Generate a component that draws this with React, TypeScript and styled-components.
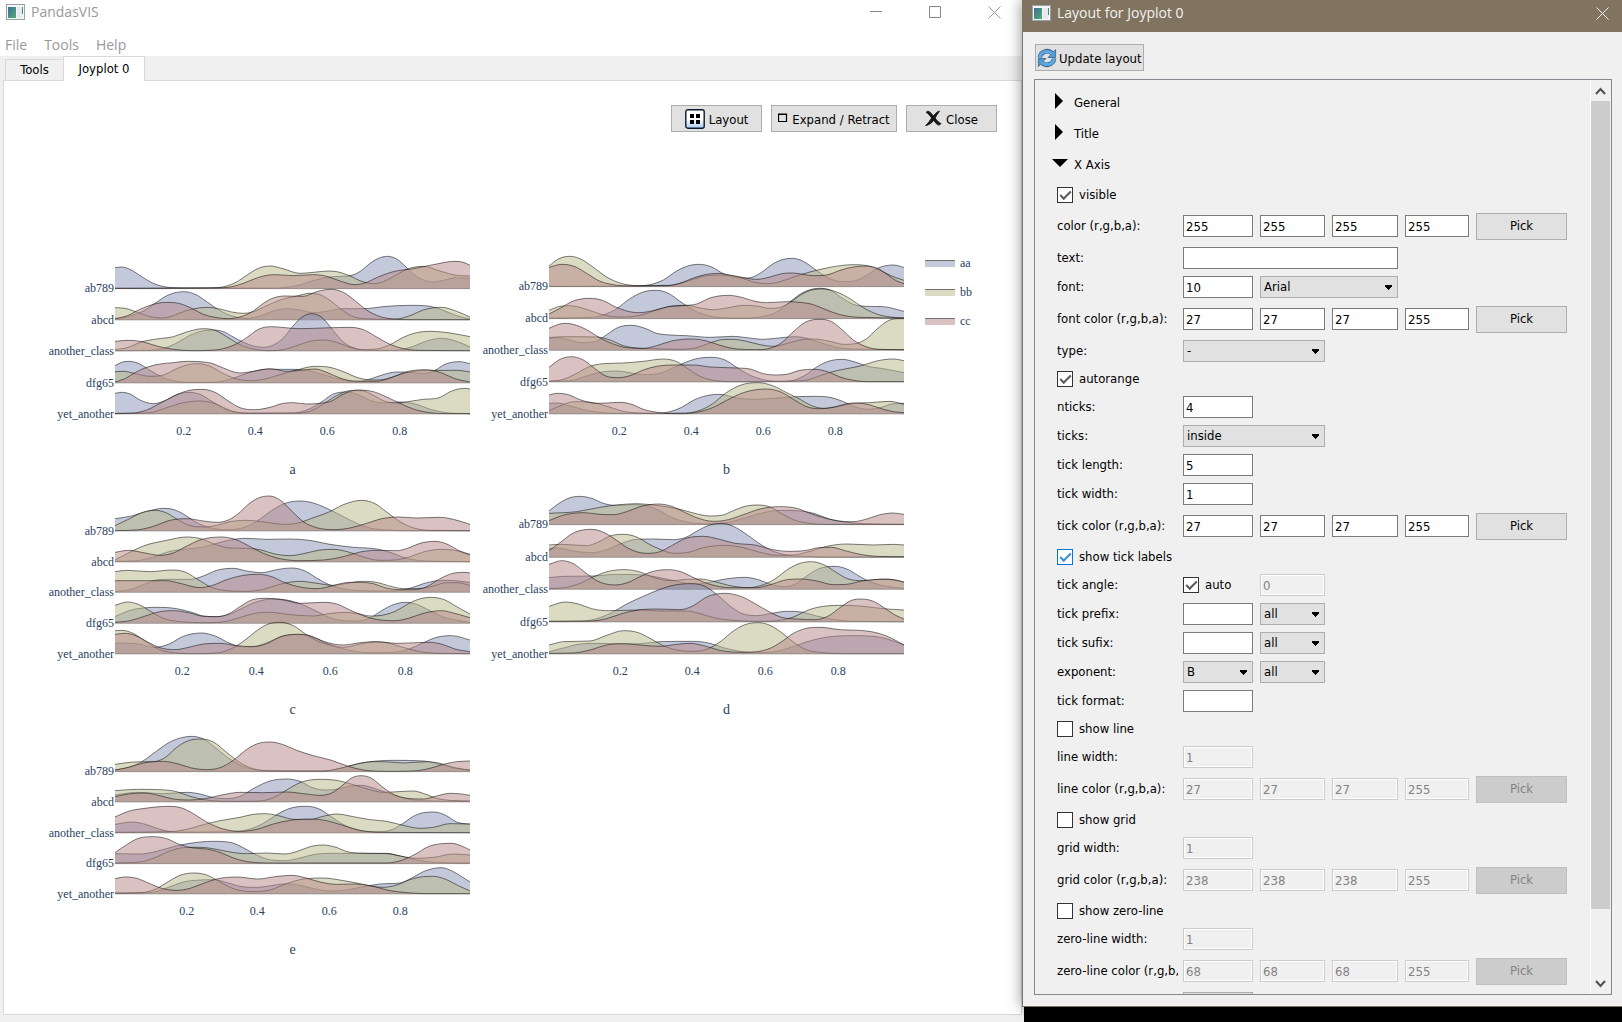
import React, { useId, useState } from "react";
import styled, { createGlobalStyle, css } from "styled-components";

const uiFont = `"DejaVu Sans Condensed", Tahoma, "DejaVu Sans", sans-serif`;
const titleFont = `"Open Sans", "Segoe UI", "Noto Sans", sans-serif`;
const plotFont = `"Liberation Serif", "Times New Roman", serif`;

const GlobalStyle = createGlobalStyle`
  *, *::before, *::after { box-sizing: border-box; }
  body { margin: 0; background: #000; font: 13px/16px ${uiFont}; color: #000; }
  button, input, select { font: inherit; color: inherit; margin: 0; border-radius: 0; }
`;

/* ---------- chart data: "x,y" control points, three units per pixel ---------- */

interface RidgeRow { base: number; series: [string, string, string]; }
interface Panel { name: string; shift: number; ticks: number[]; rows: RidgeRow[]; }

const classNames = ["ab789", "abcd", "another_class", "dfg65", "yet_another"];

const panels: Panel[] = [
  {
    name: "a", shift: 0, ticks: [431, 646, 862, 1079],
    rows: [
      { base: 145, series: [
        "225,83 245,81 270,88 305,110 340,130 385,142 450,144 700,144 770,137 810,125 860,112 900,109 935,106 965,91 990,70 1015,55 1043,49 1070,57 1100,83 1125,106 1150,120 1180,126 1210,121 1250,113 1290,115",
        "225,145 500,144 560,138 590,126 620,106 655,85 690,78 725,85 780,100 820,97 865,93 900,97 930,108 965,124 1000,131 1030,125 1060,110 1100,88 1150,79 1200,93 1250,106 1290,108",
        "225,145 520,144 580,139 610,130 640,118 670,108 705,104 760,107 820,104 860,109 900,123 945,134 975,129 1010,113 1060,95 1120,86 1180,74 1245,64 1270,67 1290,76"] },
      { base: 239, series: [
        "225,238 270,228 310,213 345,190 385,165 432,155 470,165 500,185 540,212 580,229 620,235 660,228 700,213 740,206 780,210 820,218 860,214 910,206 970,206 1040,199 1110,196 1170,199 1210,211 1250,227 1290,237",
        "225,203 255,205 290,216 330,230 368,234 400,227 430,215 465,206 500,202 540,207 575,216 610,220 640,215 680,197 720,180 770,168 810,160 840,164 870,181 905,209 935,228 970,236 1060,238 1110,227 1150,210 1205,202 1245,212 1290,231",
        "225,236 260,228 300,208 340,193 380,187 420,191 455,205 490,223 525,232 565,236 600,231 640,213 670,190 700,174 735,168 790,169 830,155 872,148 910,157 945,182 980,210 1015,228 1060,237 1120,239 1290,239"] },
      { base: 332, series: [
        "225,332 320,331 370,325 410,309 450,286 490,272 520,270 550,275 580,291 610,307 640,318 670,322 700,315 730,294 760,257 785,232 815,221 845,232 880,272 910,306 940,323 980,331 1060,331 1120,319 1160,303 1205,295 1250,304 1290,321",
        "225,329 265,322 300,307 350,297 400,290 440,276 490,266 525,271 560,290 600,314 640,327 690,332 730,329 770,317 810,304 852,300 890,307 930,322 970,329 1010,327 1050,314 1090,292 1130,278 1170,274 1230,279 1290,290",
        "225,304 265,301 310,306 350,318 400,328 460,332 510,331 550,326 580,316 620,293 655,268 695,260 735,263 775,266 850,264 930,262 970,269 1010,291 1050,313 1090,326 1140,331 1290,332"] },
      { base: 428, series: [
        "225,377 245,367 267,364 295,370 330,391 370,413 410,424 450,427 510,427 550,423 590,411 630,397 680,388 750,388 800,391 850,404 900,418 950,425 985,419 1020,407 1070,396 1110,397 1150,401 1185,391 1215,373 1260,365 1290,371",
        "225,395 250,394 290,402 330,409 370,405 410,386 440,375 475,371 510,379 545,398 580,414 635,422 680,416 720,404 770,390 825,379 870,382 915,397 950,412 1000,420 1040,417 1080,404 1120,394 1150,392 1250,391 1290,396",
        "225,426 255,416 285,398 320,382 360,372 400,368 440,364 480,365 515,370 550,384 600,399 640,394 690,386 740,394 790,390 825,387 860,397 900,414 940,423 1010,424 1060,410 1105,394 1160,389 1205,399 1245,416 1290,426"] },
      { base: 521, series: [
        "225,460 245,457 270,462 300,480 340,491 375,482 410,464 445,457 480,463 520,487 555,507 610,519 760,519 800,510 840,489 880,462 920,456 955,464 990,481 1030,489 1080,486 1125,492 1175,509 1220,518 1290,521",
        "225,521 330,518 380,503 430,488 480,483 525,491 575,513 630,520 780,519 815,512 850,492 890,467 930,452 965,452 1000,466 1035,484 1070,489 1110,484 1150,478 1195,474 1235,453 1275,445 1290,447",
        "225,520 280,519 320,510 360,490 400,469 440,453 485,448 525,457 565,483 600,503 645,509 690,502 730,490 760,488 800,492 840,490 875,483 905,465 950,450 1000,455 1040,471 1080,490 1120,507 1170,518 1220,521 1290,521"] },
    ],
  },
  {
    name: "b", shift: 18, ticks: [436, 652, 868, 1084],
    rows: [
      { base: 139, series: [
        "207,139 460,138 510,134 550,120 590,93 620,79 658,73 695,81 730,101 770,113 805,114 840,100 880,71 910,58 937,55 970,64 1005,88 1045,114 1090,125 1130,121 1160,106 1195,84 1240,75 1272,82",
        "207,78 235,57 270,49 300,56 340,82 380,111 420,129 480,137 570,136 620,124 670,109 720,105 780,112 820,126 860,131 900,125 940,111 990,96 1050,82 1120,74 1165,78 1200,91 1235,108 1272,121",
        "207,82 245,73 285,80 320,100 360,124 400,134 460,138 560,137 600,130 640,114 680,103 715,100 770,109 830,118 870,111 905,101 937,99 1000,107 1040,105 1080,91 1120,81 1160,78 1195,86 1225,106 1250,123 1272,131"] },
      { base: 235, series: [
        "207,234 330,232 370,225 410,206 450,176 490,156 530,151 565,160 600,184 640,210 680,226 730,233 790,234 850,229 890,216 930,185 970,157 1015,145 1050,150 1085,173 1120,193 1160,199 1210,200 1272,214",
        "207,211 235,200 265,197 300,202 340,215 385,228 430,231 480,226 530,210 570,199 620,196 660,204 700,209 740,204 790,196 830,198 870,205 900,202 930,188 965,163 1000,149 1030,147 1070,156 1110,176 1150,203 1190,222 1230,231 1272,234",
        "207,222 240,205 280,183 330,175 370,182 405,200 440,213 475,218 515,213 560,201 610,197 650,192 690,174 745,166 785,172 825,184 860,188 920,185 960,187 1000,194 1035,208 1080,224 1140,232 1272,234"] },
      { base: 330, series: [
        "207,295 235,293 270,300 305,308 345,305 380,284 415,262 455,256 495,265 530,280 570,285 620,287 690,292 760,289 800,293 850,298 895,294 945,290 985,296 1025,309 1070,322 1120,327 1272,329",
        "207,293 250,290 350,291 390,300 430,317 480,325 520,326 600,328 650,323 690,309 725,299 757,298 800,304 840,314 880,319 920,311 960,300 1000,297 1050,304 1090,313 1130,310 1160,296 1190,268 1225,242 1255,236 1272,236",
        "207,265 230,255 255,250 290,256 325,272 360,294 400,312 440,323 490,325 530,317 575,303 635,297 680,303 720,316 770,327 830,329 870,325 905,308 935,280 975,247 1020,238 1055,245 1085,268 1120,300 1155,319 1200,328 1272,329"] },
      { base: 425, series: [
        "207,424 270,422 310,411 360,397 410,393 450,398 490,404 530,402 565,390 605,372 650,356 697,352 735,360 770,382 805,403 850,419 900,424 940,421 975,406 1010,381 1045,364 1087,358 1125,366 1160,378 1210,386 1272,398",
        "207,424 250,418 290,400 325,381 370,371 430,369 490,364 550,357 590,365 625,387 660,409 700,421 750,425 900,424 970,422 1010,411 1050,397 1100,386 1145,377 1190,363 1240,357 1272,362",
        "207,382 240,358 275,350 310,360 345,386 375,407 415,413 450,407 490,390 530,379 580,375 640,375 690,381 770,384 810,387 850,401 885,405 920,403 960,391 1005,388 1045,396 1080,411 1120,421 1170,425 1272,425"] },
      { base: 521, series: [
        "207,490 230,489 265,496 310,509 360,517 420,520 530,520 570,515 605,502 640,481 680,467 720,463 770,474 820,478 880,475 950,470 1000,469 1050,472 1090,485 1130,502 1165,508 1200,503 1240,491 1272,490",
        "207,512 235,500 265,488 300,485 350,490 400,505 440,516 530,520 620,519 665,509 700,490 735,461 780,436 835,428 880,438 920,458 960,478 990,495 1030,505 1070,500 1120,490 1170,488 1230,484 1272,493",
        "207,465 230,460 265,464 300,479 350,490 380,489 420,487 455,493 490,508 540,518 600,521 650,517 700,502 740,481 790,458 860,447 905,457 945,481 985,502 1025,506 1065,501 1100,491 1130,489 1170,495 1210,508 1240,515 1272,518"] },
    ],
  },
  {
    name: "c", shift: 0, ticks: [427, 649, 871, 1096],
    rows: [
      { base: 152, series: [
        "225,116 275,108 325,93 370,85 405,90 435,105 465,125 510,143 565,149 610,143 650,124 690,95 730,72 780,63 820,69 860,85 905,107 950,130 990,144 1040,150 1110,152 1290,152",
        "225,137 265,118 305,98 345,91 380,99 410,117 445,135 495,141 530,136 570,125 620,121 680,127 730,133 775,129 815,115 865,97 910,74 965,61 1005,71 1040,96 1080,125 1125,145 1180,151 1290,152",
        "225,152 290,150 340,139 390,121 440,116 490,123 530,127 565,120 595,101 625,73 655,54 688,48 720,60 755,93 790,125 830,143 885,149 930,144 980,130 1030,115 1075,111 1130,114 1200,112 1240,118 1290,133"] },
      { base: 245, series: [
        "225,244 290,242 340,231 390,214 440,207 490,201 530,190 570,180 620,175 680,178 750,177 800,180 870,193 940,202 1010,207 1050,217 1100,235 1160,243 1290,245",
        "225,240 265,219 310,198 380,181 440,171 485,177 525,193 570,204 620,205 660,209 700,221 750,227 795,220 840,210 880,208 925,216 970,231 1020,241 1065,240 1110,230 1150,216 1200,208 1240,210 1290,225",
        "225,217 265,211 315,219 360,226 400,219 435,201 480,180 545,171 585,178 625,197 670,220 720,236 780,242 850,240 910,230 960,216 1010,211 1070,212 1105,204 1140,190 1185,184 1225,194 1255,211 1290,223"] },
      { base: 336, series: [
        "225,335 270,329 315,312 355,299 400,298 450,298 490,288 530,271 580,265 620,273 665,278 710,269 755,264 795,273 830,294 865,313 905,325 960,332 1060,333 1110,325 1150,311 1185,303 1225,301 1290,307",
        "225,275 260,271 330,275 395,270 435,276 470,296 510,320 550,331 620,334 670,328 715,314 780,304 825,309 880,316 920,310 965,304 1010,307 1045,317 1090,326 1140,326 1180,318 1220,308 1255,308 1290,317",
        "225,302 380,302 420,310 480,323 515,317 555,301 605,287 655,283 695,290 735,308 775,320 830,326 875,318 910,309 950,307 1000,311 1035,323 1080,329 1120,329 1160,320 1195,299 1235,281 1275,277 1290,279"] },
      { base: 429, series: [
        "225,410 270,391 310,384 350,382 410,386 455,397 490,408 530,410 565,404 600,388 645,367 700,357 745,361 790,375 830,394 870,413 910,422 955,423 990,414 1025,392 1060,374 1100,367 1135,375 1170,392 1210,411 1250,421 1290,427",
        "225,376 262,366 295,373 330,393 365,413 420,425 500,428 560,424 605,411 645,400 690,397 750,404 820,408 865,401 915,397 955,401 990,408 1030,405 1070,392 1100,374 1135,358 1175,352 1215,360 1250,380 1290,402",
        "225,427 270,422 310,410 355,396 400,392 445,398 490,409 530,410 565,402 600,380 635,360 680,355 730,360 780,370 850,367 890,372 930,390 975,409 1020,420 1065,422 1105,415 1150,400 1205,392 1240,399 1290,413"] },
      { base: 521, series: [
        "225,489 290,491 345,502 385,493 430,469 485,459 525,468 570,490 610,501 650,498 690,484 735,466 780,463 820,472 870,494 920,509 990,518 1060,517 1110,506 1150,488 1190,472 1235,467 1290,480",
        "225,452 245,451 275,458 315,483 355,507 400,518 470,521 530,519 570,508 610,484 645,456 680,434 720,427 760,437 795,461 830,482 870,495 910,502 960,492 1000,486 1045,489 1085,501 1140,515 1200,520 1290,521",
        "225,463 255,460 285,466 325,487 360,503 405,509 450,501 490,492 540,490 590,497 640,500 680,491 720,471 770,463 810,467 850,484 910,495 960,488 1010,485 1070,490 1130,488 1170,487 1210,494 1245,507 1290,515"] },
    ],
  },
  {
    name: "d", shift: 18, ticks: [439, 655, 874, 1093],
    rows: [
      { base: 133, series: [
        "207,93 230,75 260,57 297,49 335,55 370,70 405,76 460,74 500,77 535,90 575,112 620,126 690,131 750,126 800,112 850,98 905,91 960,93 1005,101 1045,116 1095,126 1150,131 1272,133",
        "207,100 290,95 360,82 410,75 470,71 500,73 550,79 600,88 640,99 690,108 725,106 760,92 795,79 835,75 870,81 905,101 940,119 980,129 1050,133 1272,133",
        "207,122 245,107 310,98 360,103 400,104 440,95 480,80 535,72 575,79 610,95 650,113 700,124 745,119 790,104 840,87 900,80 950,85 990,100 1030,113 1075,123 1120,125 1160,117 1200,104 1240,99 1272,103"] },
      { base: 231, series: [
        "207,205 235,204 285,214 335,218 380,209 425,190 470,178 520,177 580,179 620,171 655,151 690,135 725,130 760,139 795,160 830,185 865,207 910,223 970,229 1060,231 1272,231",
        "207,195 245,193 320,197 355,186 390,168 430,163 470,171 505,191 540,208 585,220 625,217 670,203 735,196 790,203 840,217 890,226 940,225 990,214 1040,199 1100,192 1180,195 1240,193 1272,195",
        "207,212 240,188 280,159 335,148 375,159 410,181 445,205 500,220 540,215 575,197 615,176 670,169 715,177 760,189 830,196 870,207 925,214 980,211 1015,203 1055,202 1095,212 1140,223 1190,229 1272,230"] },
      { base: 327, series: [
        "207,293 250,289 340,288 410,283 490,285 540,293 590,304 640,312 680,309 720,300 760,294 795,292 835,299 870,312 910,320 945,313 980,288 1015,267 1065,259 1105,269 1140,290 1180,309 1220,319 1272,325",
        "207,326 260,322 300,310 340,291 385,274 435,269 480,276 525,294 575,302 620,298 660,297 705,305 750,317 805,323 845,316 885,297 925,267 960,250 995,245 1035,256 1070,278 1105,297 1150,302 1210,297 1240,299 1272,307",
        "207,253 245,242 280,251 315,277 350,302 405,315 445,307 480,290 520,274 565,269 605,276 645,295 690,313 750,323 830,323 880,311 920,299 965,297 1010,303 1060,314 1100,313 1145,303 1210,298 1245,300 1272,306"] },
      { base: 425, series: [
        "207,424 310,423 350,416 395,398 440,372 490,349 540,328 585,315 635,311 675,319 710,343 750,378 785,400 830,407 870,401 920,394 970,397 1010,408 1065,419 1120,424 1272,425",
        "207,379 255,366 295,372 335,386 385,392 430,391 490,390 540,393 620,393 660,401 705,414 760,421 840,424 900,421 945,409 985,390 1030,379 1090,376 1150,379 1210,386 1272,390",
        "207,424 330,423 380,416 425,401 475,390 530,387 600,389 640,377 680,351 735,340 785,350 825,371 865,394 905,412 950,417 1005,419 1045,408 1080,383 1115,361 1145,357 1180,364 1215,385 1245,405 1272,417"] },
      { base: 521, series: [
        "207,515 250,504 300,492 360,490 420,492 480,491 540,485 640,484 690,490 730,503 780,514 840,518 890,514 930,503 975,487 1030,473 1120,467 1180,469 1225,478 1272,495",
        "207,495 250,485 330,483 380,466 430,452 475,458 510,475 550,497 595,511 640,514 685,506 725,482 760,453 795,434 835,428 870,436 905,458 940,486 975,508 1030,518 1100,521 1272,521",
        "207,520 280,519 330,510 380,495 430,491 490,496 540,499 590,493 630,490 675,498 720,511 780,517 830,515 870,505 905,485 940,460 975,446 1020,442 1080,449 1160,453 1200,461 1235,475 1272,495"] },
    ],
  },
  {
    name: "e", shift: 0, ticks: [440, 652, 868, 1081],
    rows: [
      { base: 154, series: [
        "225,150 270,141 310,122 350,93 390,66 425,53 455,49 490,57 525,82 560,110 600,135 650,150 720,153 850,153 910,143 960,130 1010,123 1060,121 1150,123 1200,133 1240,144 1290,150",
        "225,133 280,126 340,125 375,113 410,82 445,62 485,57 520,66 555,93 590,121 630,143 680,152 850,153 900,145 950,132 1000,125 1050,126 1090,129 1160,125 1200,130 1240,142 1290,151",
        "225,150 265,142 310,129 370,124 415,132 455,144 500,149 540,143 580,121 615,92 650,72 690,66 730,74 770,91 820,107 875,121 925,139 970,150 1050,154 1120,153 1170,145 1210,133 1250,125 1290,123"] },
      { base: 245, series: [
        "225,225 290,217 370,221 440,217 480,222 520,233 560,236 600,229 645,203 690,183 740,177 780,184 815,202 855,210 895,207 930,198 965,196 1000,204 1040,218 1090,234 1150,242 1290,244",
        "225,212 290,208 360,209 410,215 450,229 500,240 580,244 660,243 700,233 740,210 780,188 840,178 895,182 940,194 985,208 1030,217 1075,215 1120,213 1155,222 1190,235 1230,241 1290,243",
        "225,230 265,222 315,219 355,226 400,237 450,240 495,236 545,225 600,217 670,218 740,216 790,221 840,226 875,219 905,198 935,174 963,167 995,175 1025,199 1055,220 1095,234 1150,237 1190,228 1230,220 1265,222 1290,226"] },
      { base: 338, series: [
        "225,313 275,306 320,314 360,328 410,336 580,335 630,327 670,310 710,284 750,265 800,259 840,268 875,291 915,316 960,332 1010,335 1050,331 1085,313 1120,289 1150,278 1183,276 1215,285 1250,306 1290,313",
        "225,337 390,335 440,328 490,314 540,302 600,292 640,283 675,281 715,287 760,298 810,299 845,290 890,282 940,290 990,299 1040,304 1085,315 1140,325 1180,322 1230,311 1290,312",
        "225,291 265,274 315,265 385,259 425,264 460,281 500,306 540,324 600,334 650,328 700,312 750,301 810,297 860,302 905,315 960,331 1020,337 1290,338"] },
      { base: 430, series: [
        "225,401 300,402 350,394 400,380 450,370 520,364 570,367 600,378 640,400 680,417 735,422 780,414 825,403 870,400 950,400 1040,400 1085,409 1130,420 1190,427 1290,429",
        "225,429 300,426 345,413 390,393 430,383 480,382 530,388 570,396 620,401 680,399 735,402 775,393 810,380 850,375 885,381 925,396 980,400 1040,401 1080,408 1130,415 1180,412 1240,402 1290,405",
        "225,398 260,374 295,355 340,350 380,356 420,374 460,384 500,387 540,397 580,414 630,426 700,429 1040,429 1085,421 1125,403 1165,380 1205,371 1235,370 1265,378 1290,390"] },
      { base: 521, series: [
        "225,519 340,516 385,502 430,486 480,480 520,479 565,489 600,499 650,502 700,496 740,491 780,496 825,507 875,513 920,510 965,501 1020,492 1080,489 1115,474 1155,453 1203,443 1240,455 1265,470 1290,486",
        "225,520 300,519 345,508 385,485 420,466 460,459 500,465 535,483 575,504 640,515 690,510 740,491 790,477 850,474 905,481 950,489 990,498 1030,502 1070,495 1110,479 1150,470 1180,469 1220,479 1255,497 1290,513",
        "225,476 255,471 290,475 325,489 365,505 410,511 450,505 490,490 530,477 590,471 655,477 705,470 755,466 795,473 840,486 890,493 950,492 1000,499 1045,511 1100,518 1160,521 1290,521"] },
    ],
  },
];

const seriesStyle = [
  { name: "aa", color: "#8791b5" },
  { name: "bb", color: "#b7b585" },
  { name: "cc", color: "#b58585" },
];

const plotLeft = 225;
const plotRight = 1290;

/* Monotone cubic interpolation keeps the ridges smooth without overshoot. */
function curve(points: string, shift: number): string {
  const p = points.split(" ").map((s) => s.split(",").map(Number));
  const n = p.length;
  const d: number[] = [];
  for (let i = 0; i < n - 1; i++) d.push((p[i + 1][1] - p[i][1]) / (p[i + 1][0] - p[i][0]));
  const m = p.map((_, i) => {
    if (i === 0) return d[0];
    if (i === n - 1) return d[n - 2];
    if (d[i - 1] * d[i] <= 0) return 0;
    const h0 = p[i][0] - p[i - 1][0];
    const h1 = p[i + 1][0] - p[i][0];
    const w = (h1 * d[i - 1] + h0 * d[i]) / (h0 + h1);
    const cap = 3 * Math.min(Math.abs(d[i - 1]), Math.abs(d[i]));
    return Math.sign(w) * Math.min(Math.abs(w), cap);
  });
  let out = `M${p[0][0] + shift},${p[0][1]}`;
  for (let i = 0; i < n - 1; i++) {
    const h = (p[i + 1][0] - p[i][0]) / 3;
    out += `C${(p[i][0] + h + shift).toFixed(1)},${(p[i][1] + m[i] * h).toFixed(1)} ${(p[i + 1][0] - h + shift).toFixed(1)},${(p[i + 1][1] - m[i + 1] * h).toFixed(1)} ${p[i + 1][0] + shift},${p[i + 1][1]}`;
  }
  return out;
}

const PlotSvg = styled.svg`
  display: block;
  width: 434px;
  height: 240px;
  overflow: visible;
  font: 12px ${plotFont};
  fill: #2a3f5f;
`;

function JoyPanel({ panel }: { panel: Panel }) {
  return (
    <PlotSvg viewBox="0 0 434 240" role="img" aria-label={`Distribution of ${panel.name}`}>
      <g transform="scale(0.33333)">
        {panel.rows.map((row, r) => (
          <g key={r}>
            {row.series.map((pts, s) => {
              const line = curve(pts, panel.shift);
              return (
                <g key={s}>
                  <path d={`${line}L${plotRight},${row.base + 1}L${plotLeft},${row.base + 1}Z`} fill={seriesStyle[s].color} fillOpacity={0.5} />
                  <path d={line} fill="none" stroke="#000" strokeOpacity={0.5} strokeWidth={3} />
                </g>
              );
            })}
            <path d={`M${plotLeft},${row.base + 1}H${plotRight}`} stroke="#555" strokeOpacity={0.4} strokeWidth={3} />
          </g>
        ))}
      </g>
      {panel.rows.map((row, r) => (
        <text key={r} x={(plotLeft - 3) / 3} y={Math.round(row.base / 3 + 4)} textAnchor="end">{classNames[r]}</text>
      ))}
      {panel.ticks.map((t, i) => (
        <text key={t} x={t / 3} y={195} textAnchor="middle">{(0.2 * (i + 1)).toFixed(1)}</text>
      ))}
      <text x={(plotLeft + plotRight) / 6} y={234} textAnchor="middle" fontSize={14}>{panel.name}</text>
    </PlotSvg>
  );
}

/* ---------- shared window parts ---------- */

const Desktop = styled.div`
  display: flex;
  align-items: flex-start;
  height: 100vh;
  min-height: 480px;
  overflow: hidden;
`;

const MainWindow = styled.main`
  flex: 1;
  min-width: 0;
  align-self: stretch;
  display: flex;
  flex-direction: column;
  background: #f0f0f0;
`;

const TitleBar = styled.header<{ $dialog?: boolean }>`
  display: flex;
  align-items: center;
  flex: none;
  gap: 6px;
  height: ${(p) => (p.$dialog ? 32 : 28)}px;
  padding: 0 ${(p) => (p.$dialog ? 4 : 14)}px ${(p) => (p.$dialog ? 6 : 4)}px ${(p) => (p.$dialog ? 9 : 6)}px;
  background: ${(p) => (p.$dialog ? "#80735f" : "#fff")};
  color: ${(p) => (p.$dialog ? "#f4f2ef" : "#999")};
`;

const WindowTitle = styled.h1`
  flex: 1;
  margin: 0;
  font: 400 14px/20px ${titleFont};
`;

const CaptionButtons = styled.div`
  display: flex;
  gap: 28px;
`;

const CaptionButton = styled.button`
  display: grid;
  place-items: center;
  width: 31px;
  height: 22px;
  padding: 0;
  border: 0;
  background: none;
`;

const AppIcon = () => (
  <svg width="19" height="16" viewBox="0 0 19 16" aria-hidden="true">
    <defs>
      <linearGradient id="pane" x1="0" y1="0" x2="1" y2="1">
        <stop offset="0" stopColor="#3f6f9f" />
        <stop offset="1" stopColor="#4fae6c" />
      </linearGradient>
    </defs>
    <rect x="0.5" y="0.5" width="18" height="15" fill="#f4f6f8" stroke="#98a0a8" />
    <rect x="2" y="3" width="8" height="11" fill="url(#pane)" />
    <rect x="11" y="3" width="5" height="11" fill="#e6eaee" />
    <rect x="16" y="3" width="1" height="7" fill="#3f8f80" />
  </svg>
);

const CrossGlyph = () => (
  <svg width="13" height="13" viewBox="0 0 13 13" aria-hidden="true">
    <path d="M0.5 0.5l12 12M12.5 0.5l-12 12" stroke="currentColor" fill="none" />
  </svg>
);

const MenuBar = styled.nav`
  display: flex;
  flex: none;
  gap: 17px;
  height: 28px;
  padding: 0 5px 0 5px;
  background: #fff;
  font: 14px/34px ${titleFont};
`;

const MenuLink = styled.a`
  color: #999;
  text-decoration: none;
`;

const TabStrip = styled.div`
  display: flex;
  flex: none;
  align-items: flex-end;
  height: 24px;
  padding-left: 5px;
`;

const Tab = styled.button<{ $active?: boolean }>`
  position: relative;
  width: ${(p) => (p.$active ? 82 : 58)}px;
  height: ${(p) => (p.$active ? 25 : 22)}px;
  margin-bottom: -1px;
  padding: 0;
  border: 1px solid #d9d9d9;
  border-bottom-width: ${(p) => (p.$active ? 0 : 1)}px;
  border-right-width: ${(p) => (p.$active ? 1 : 0)}px;
  background: ${(p) => (p.$active ? "#fff" : "#f0f0f0")};
`;

const TabPage = styled.section`
  display: flex;
  flex: 1;
  flex-direction: column;
  min-height: 0;
  margin: 0 2px 7px 3px;
  padding: 24px 24px 0 36px;
  border: 1px solid #d9d9d9;
  background: #fff;
`;

const Toolbar = styled.div`
  display: flex;
  justify-content: flex-end;
  gap: 9px;
  margin-bottom: 108px;
`;

const PushButton = styled.button<{ $w?: number }>`
  display: flex;
  align-items: center;
  justify-content: center;
  gap: 4px;
  width: ${(p) => (p.$w ? `${p.$w}px` : "auto")};
  height: 27px;
  padding: 0;
  border: 1px solid #adadad;
  background: #e1e1e1;
  &:disabled { background: #ccc; border-color: #bfbfbf; color: #838383; }
`;

const ButtonText = styled.span`
  padding-top: 2px;
`;

const PlotArea = styled.div`
  display: flex;
  align-items: flex-start;
`;

const PanelGrid = styled.div`
  display: grid;
  flex: none;
  grid-template-columns: repeat(2, 434px);
`;

const Legend = styled.ul`
  display: flex;
  flex-direction: column;
  gap: 13px;
  margin: 0;
  padding: 15px 0 0 17px;
  list-style: none;
  font: 12px/16px ${plotFont};
  color: #2a3f5f;
`;

const LegendItem = styled.li`
  display: flex;
  align-items: center;
  gap: 5px;
`;

const Swatch = styled.span<{ $color: string }>`
  width: 30px;
  height: 7px;
  border-top: 1px solid #707070;
  background: color-mix(in srgb, ${(p) => p.$color} 50%, white);
`;

/* ---------- layout dialog ---------- */

const Dialog = styled.aside`
  position: relative;
  display: flex;
  flex: none;
  flex-direction: column;
  width: 600px;
  height: calc(100vh - 15px);
  margin-left: -2px;
  border: solid #80735f;
  border-width: 0 0 1px 1px;
  background: #f0f0f0;
  box-shadow: 0 0 14px rgba(0, 0, 0, 0.45);
`;

const DialogBody = styled.div`
  display: flex;
  flex: 1;
  flex-direction: column;
  gap: 8px;
  min-height: 0;
  padding: 12px 10px 11px 11px;
`;

const UpdateButton = styled(PushButton)`
  flex: none;
  align-self: flex-start;
  gap: 2px;
  margin-left: 1px;
  padding: 0 1px;
`;

const ScrollFrame = styled.div`
  display: flex;
  flex: 1;
  min-height: 0;
  border: 1px solid #828790;
`;

const Form = styled.form`
  flex: 1;
  display: flex;
  flex-direction: column;
  gap: 7px;
  min-width: 0;
  overflow: hidden;
  padding: 11px 0 0 22px;
  > * { flex: none; }
`;

const SectionHeads = styled.div`
  display: flex;
  flex-direction: column;
  gap: 7px;
  margin: 0 0 1px -5px;
`;

const SectionHead = styled.button`
  display: flex;
  align-items: center;
  gap: 6px;
  height: 24px;
  padding: 0;
  border: 0;
  background: none;
  svg { margin-bottom: 4px; }
`;

const FieldRow = styled.div<{ $tall?: boolean }>`
  display: grid;
  grid-template-columns: 119px 70px 65px 66px 64px 91px;
  column-gap: 7px;
  align-items: center;
  height: ${(p) => (p.$tall ? 28 : 22)}px;
`;

const FieldLabel = styled.label`
  margin-right: -2px;
  overflow: hidden;
  white-space: nowrap;
`;

const span = css<{ $span?: number }>`
  grid-column: span ${(p) => p.$span ?? 1};
`;

const TextBox = styled.input<{ $span?: number }>`
  ${span}
  width: 100%;
  min-width: 0;
  height: 22px;
  padding: 0 2px;
  border: 1px solid #7a7a7a;
  background: #fff;
  &:disabled { background: #f0f0f0; border-color: #ccc; box-shadow: inset 0 0 0 1px #fff; color: #838383; }
`;

const comboArrow = `
  linear-gradient(#000, #000) right 5px top 8px / 7px 1px no-repeat,
  linear-gradient(#000, #000) right 5px top 9px / 7px 1px no-repeat,
  linear-gradient(#000, #000) right 6px top 10px / 5px 1px no-repeat,
  linear-gradient(#000, #000) right 7px top 11px / 3px 1px no-repeat,
  linear-gradient(#000, #000) right 8px top 12px / 1px 1px no-repeat,
  #e1e1e1`;

const Combo = styled.select<{ $span?: number }>`
  ${span}
  appearance: none;
  width: 100%;
  min-width: 0;
  height: 22px;
  padding: 0 3px;
  border: 1px solid #adadad;
  background: ${comboArrow};
`;

const CheckLabel = styled.label`
  display: flex;
  align-items: center;
  align-self: start;
  gap: 6px;
  height: 20px;
`;

const InlineCheck = styled(CheckLabel)`
  align-self: center;
`;

const CheckBox = styled.input<{ $hot?: boolean }>`
  appearance: none;
  display: grid;
  place-items: center;
  width: 16px;
  height: 16px;
  border: 1px solid ${(p) => (p.$hot ? "#0078d7" : "#333")};
  background: #fff;
  &:checked::after {
    content: "";
    width: 11px;
    height: 6px;
    margin-bottom: 3px;
    border: solid ${(p) => (p.$hot ? "#3a8fd8" : "#5a5a5a")};
    border-width: 0 0 2px 2px;
    transform: rotate(-45deg);
  }
`;

const ScrollTrack = styled.div`
  display: flex;
  flex: none;
  flex-direction: column;
  width: 21px;
  border-left: 1px solid #fff;
`;

const ScrollThumb = styled.div`
  flex: 808;
  margin-right: 1px;
  background: #cdcdcd;
`;

const ScrollRest = styled.div`
  flex: 64;
`;

const ScrollButton = styled.button`
  display: grid;
  place-items: center;
  flex: none;
  height: 21px;
  padding: 0 2px 0 0;
  border: 0;
  background: none;
`;

const Chevron = ({ down }: { down?: boolean }) => (
  <svg width="11" height="8" viewBox="0 0 11 8" aria-hidden="true">
    <path d={down ? "M1 1l4.5 5L10 1" : "M1 7l4.5-5L10 7"} fill="none" stroke="#505050" strokeWidth="2" />
  </svg>
);

const Triangle = ({ open }: { open?: boolean }) => (
  <svg width="16" height="16" viewBox="0 0 16 16" aria-hidden="true">
    <path d={open ? "M0 4h16l-8 8z" : "M3 0v16l8-8z"} fill="#000" />
  </svg>
);

const RefreshIcon = () => (
  <svg width="20" height="20" viewBox="0 0 20 20" aria-hidden="true">
    <g fill="none" stroke="#44688a" strokeWidth="4.6">
      <path d="M3 9.5C3.2 4.5 10 0.8 15 5" />
      <path d="M17 10.5C16.8 15.5 10 19.2 5 15" />
    </g>
    <path d="M18.6 1.5v8h-7.6l3-3zM1.4 18.5v-8h7.6l-3 3z" fill="#4f9cda" stroke="#44688a" strokeWidth="0.9" />
    <g fill="none" stroke="#5aa9e4" strokeWidth="3">
      <path d="M3 9.2C3.4 4.6 10 1.1 15.4 5.4" />
      <path d="M17 10.8C16.6 15.4 10 18.9 4.6 14.6" />
    </g>
  </svg>
);

const GridIcon = () => (
  <svg width="20" height="20" viewBox="0 0 20 20" aria-hidden="true">
    <defs>
      <linearGradient id="tile" x1="0" y1="0" x2="0" y2="1">
        <stop offset="0.5" stopColor="#fff" />
        <stop offset="1" stopColor="#a9cdf2" />
      </linearGradient>
    </defs>
    <rect x="0.8" y="0.8" width="18.4" height="18.4" rx="2" fill="url(#tile)" stroke="#0b1a2a" strokeWidth="1.4" />
    <path d="M5 5h4v4H5zM11 5h4v4h-4zM5 11h4v4H5zM11 11h4v4h-4z" fill="#000" />
  </svg>
);

const SquareIcon = () => (
  <svg width="10" height="20" viewBox="0 0 10 20" aria-hidden="true">
    <path d="M0.5 5.5h8v7h-8zM0 5h9" fill="none" stroke="#000" strokeWidth="1.2" />
  </svg>
);

const BrushCrossIcon = () => (
  <svg width="17" height="17" viewBox="0 0 17 17" aria-hidden="true">
    <path
      d="M1 2.4C3 0.2 5 1.4 8.4 6 10.6 3 13 0.9 14.6 1.2 13.2 3.2 11.4 5.4 10.2 8c1.6 2.4 3.4 4.4 5.8 5.6-1.2 2.2-3.4 1.6-4.8 0L8.8 10.4C6.8 12.8 4.2 15 0.6 15.6 3 13.2 5 10.8 6.6 8 4.8 5.4 3.4 3.4 1 2.4z"
      fill="#161616"
      stroke="#161616"
      strokeWidth="0.8"
    />
  </svg>
);

const MinimizeGlyph = () => (
  <svg width="13" height="13" viewBox="0 0 13 13" aria-hidden="true"><path d="M0 5.5h12" stroke="#888" /></svg>
);
const MaximizeGlyph = () => (
  <svg width="13" height="13" viewBox="0 0 13 13" aria-hidden="true"><path d="M0.5 0.5h11v11h-11z" stroke="#888" fill="none" /></svg>
);

/* ---------- form rows ---------- */

function ColorRow({ label, values, disabled }: { label: string; values: string[]; disabled?: boolean }) {
  const id = useId();
  return (
    <FieldRow $tall>
      <FieldLabel htmlFor={id}>{label}</FieldLabel>
      {values.map((v, i) => (
        <TextBox key={i} id={i === 0 ? id : undefined} aria-label={i ? `${label} channel ${i + 1}` : undefined} defaultValue={v} disabled={disabled} />
      ))}
      <PushButton type="button" disabled={disabled}>Pick</PushButton>
    </FieldRow>
  );
}

function TextRow({ label, value = "", spanCols, disabled, options }: {
  label: string; value?: string; spanCols?: number; disabled?: boolean; options?: string[];
}) {
  const id = useId();
  return (
    <FieldRow>
      <FieldLabel htmlFor={id}>{label}</FieldLabel>
      <TextBox id={id} $span={spanCols} defaultValue={value} disabled={disabled} />
      {options && (
        <Combo aria-label={`${label} shown for`}>{options.map((o) => <option key={o}>{o}</option>)}</Combo>
      )}
    </FieldRow>
  );
}

function ComboRow({ label, options }: { label: string; options: string[] }) {
  const id = useId();
  return (
    <FieldRow>
      <FieldLabel htmlFor={id}>{label}</FieldLabel>
      <Combo id={id} $span={2}>{options.map((o) => <option key={o}>{o}</option>)}</Combo>
    </FieldRow>
  );
}

function CheckRow({ label, checked, hot }: { label: string; checked?: boolean; hot?: boolean }) {
  return (
    <CheckLabel>
      <CheckBox type="checkbox" defaultChecked={checked} $hot={hot} />
      {label}
    </CheckLabel>
  );
}

const dark = ["27", "27", "27", "255"];
const showWhen = ["all", "first", "last", "none"];

function LayoutForm() {
  return (
    <Form onSubmit={(e) => e.preventDefault()}>
      <SectionHeads>
        <SectionHead type="button" aria-expanded={false}><Triangle />General</SectionHead>
        <SectionHead type="button" aria-expanded={false}><Triangle />Title</SectionHead>
        <SectionHead type="button" aria-expanded><Triangle open />X Axis</SectionHead>
      </SectionHeads>
      <CheckRow label="visible" checked />
      <ColorRow label="color (r,g,b,a):" values={["255", "255", "255", "255"]} />
      <TextRow label="text:" spanCols={3} />
      <FieldRow>
        <FieldLabel htmlFor="font-size">font:</FieldLabel>
        <TextBox id="font-size" defaultValue="10" />
        <Combo $span={2} aria-label="font family"><option>Arial</option></Combo>
      </FieldRow>
      <ColorRow label="font color (r,g,b,a):" values={dark} />
      <ComboRow label="type:" options={["-", "linear", "log", "date"]} />
      <CheckRow label="autorange" checked />
      <TextRow label="nticks:" value="4" />
      <ComboRow label="ticks:" options={["inside", "outside"]} />
      <TextRow label="tick length:" value="5" />
      <TextRow label="tick width:" value="1" />
      <ColorRow label="tick color (r,g,b,a):" values={dark} />
      <CheckRow label="show tick labels" checked hot />
      <FieldRow>
        <FieldLabel htmlFor="tick-angle">tick angle:</FieldLabel>
        <InlineCheck><CheckBox type="checkbox" defaultChecked />auto</InlineCheck>
        <TextBox id="tick-angle" defaultValue="0" disabled />
      </FieldRow>
      <TextRow label="tick prefix:" options={showWhen} />
      <TextRow label="tick sufix:" options={showWhen} />
      <FieldRow>
        <FieldLabel htmlFor="exponent">exponent:</FieldLabel>
        <Combo id="exponent"><option>B</option><option>e</option></Combo>
        <Combo aria-label="exponent shown for">{showWhen.map((o) => <option key={o}>{o}</option>)}</Combo>
      </FieldRow>
      <TextRow label="tick format:" />
      <CheckRow label="show line" />
      <TextRow label="line width:" value="1" disabled />
      <ColorRow label="line color (r,g,b,a):" values={dark} disabled />
      <CheckRow label="show grid" />
      <TextRow label="grid width:" value="1" disabled />
      <ColorRow label="grid color (r,g,b,a):" values={["238", "238", "238", "255"]} disabled />
      <CheckRow label="show zero-line" />
      <TextRow label="zero-line width:" value="1" disabled />
      <ColorRow label="zero-line color (r,g,b,a):" values={["68", "68", "68", "255"]} disabled />
      <FieldRow>
        <span />
        <Combo aria-label="side"><option></option></Combo>
      </FieldRow>
    </Form>
  );
}

export default function App() {
  const [tab, setTab] = useState(1);
  return (
    <>
      <GlobalStyle />
      <Desktop>
        <MainWindow>
          <TitleBar>
            <AppIcon />
            <WindowTitle>PandasVIS</WindowTitle>
            <CaptionButtons>
              <CaptionButton aria-label="Minimize"><MinimizeGlyph /></CaptionButton>
              <CaptionButton aria-label="Maximize"><MaximizeGlyph /></CaptionButton>
              <CaptionButton aria-label="Close window"><CrossGlyph /></CaptionButton>
            </CaptionButtons>
          </TitleBar>
          <MenuBar>
            <MenuLink href="#file">File</MenuLink>
            <MenuLink href="#tools">Tools</MenuLink>
            <MenuLink href="#help">Help</MenuLink>
          </MenuBar>
          <TabStrip role="tablist">
            <Tab role="tab" aria-selected={tab === 0} $active={tab === 0} onClick={() => setTab(0)}>Tools</Tab>
            <Tab role="tab" aria-selected={tab === 1} $active={tab === 1} onClick={() => setTab(1)}>Joyplot 0</Tab>
          </TabStrip>
          <TabPage>
            <Toolbar>
              <PushButton $w={91}><GridIcon /><ButtonText>Layout</ButtonText></PushButton>
              <PushButton $w={126}><SquareIcon /><ButtonText>Expand / Retract</ButtonText></PushButton>
              <PushButton $w={91}><BrushCrossIcon /><ButtonText>Close</ButtonText></PushButton>
            </Toolbar>
            <PlotArea>
              <PanelGrid>{panels.map((p) => <JoyPanel key={p.name} panel={p} />)}</PanelGrid>
              <Legend>
                {seriesStyle.map((s) => (
                  <LegendItem key={s.name}><Swatch $color={s.color} />{s.name}</LegendItem>
                ))}
              </Legend>
            </PlotArea>
          </TabPage>
        </MainWindow>
        <Dialog role="dialog" aria-label="Layout for Joyplot 0">
          <TitleBar $dialog>
            <AppIcon />
            <WindowTitle as="h2">Layout for Joyplot 0</WindowTitle>
            <CaptionButton aria-label="Close dialog"><CrossGlyph /></CaptionButton>
          </TitleBar>
          <DialogBody>
            <UpdateButton><RefreshIcon /><ButtonText>Update layout</ButtonText></UpdateButton>
            <ScrollFrame>
              <LayoutForm />
              <ScrollTrack>
                <ScrollButton aria-label="Scroll up"><Chevron /></ScrollButton>
                <ScrollThumb />
                <ScrollRest />
                <ScrollButton aria-label="Scroll down"><Chevron down /></ScrollButton>
              </ScrollTrack>
            </ScrollFrame>
          </DialogBody>
        </Dialog>
      </Desktop>
    </>
  );
}
